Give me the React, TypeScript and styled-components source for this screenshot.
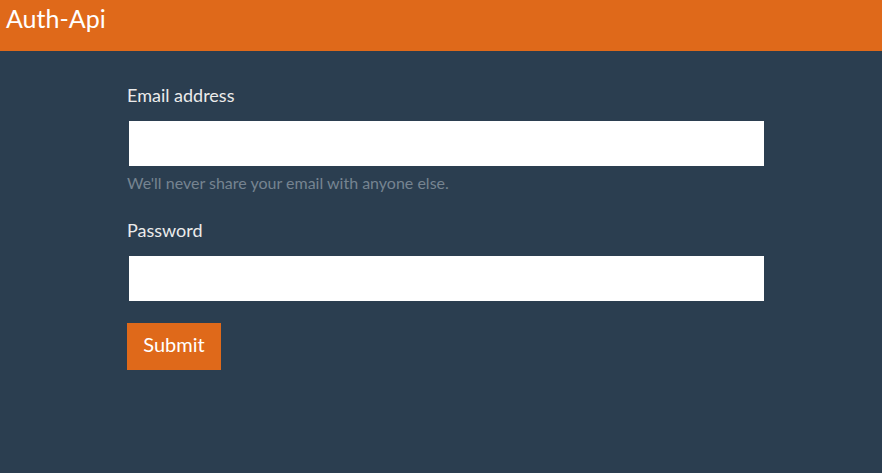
import React from 'react';
import styled, { createGlobalStyle } from 'styled-components';

const GlobalStyle = createGlobalStyle`
  *, *::before, *::after { box-sizing: border-box; }
  body {
    margin: 0;
    background: #2b3e50;
    color: #ebebeb;
    font-family: Lato, "Open Sans", sans-serif;
    font-size: 18px;
    line-height: 27px;
  }
`;

const Header = styled.header`
  padding: 0 6px 14px;
  background: #df691a;
`;

const Title = styled.h1`
  margin: 0;
  color: #fff;
  font-size: 25px;
  font-weight: 400;
  line-height: 37px;
`;

const Form = styled.form`
  width: 72.2%;
  margin-left: 14.4%;
  padding: 31px 0 24px;
`;

const Field = styled.div`
  margin-bottom: 22px;
`;

const Label = styled.label`
  display: block;
  margin-bottom: 12px;
`;

const TextBox = styled.input`
  display: block;
  width: 100%;
  height: 45px;
  padding: 6px 12px;
  border: 0;
  border-left: 2px solid #2b3e50;
  border-radius: 0;
  background: #fff;
  color: #495057;
  font: inherit;
`;

const Hint = styled.small`
  display: block;
  margin-top: 4px;
  color: #768491;
  font-size: 16px;
  line-height: 25px;
`;

const SubmitButton = styled.button`
  display: block;
  min-width: 94px;
  padding: 6px 16px 10px;
  border: 0;
  background: #df691a;
  color: #fff;
  font-family: inherit;
  font-size: 20px;
  line-height: 31px;
  cursor: pointer;
`;

export default function App() {
  return (
    <>
      <GlobalStyle />
      <Header>
        <Title>Auth-Api</Title>
      </Header>
      <main>
        <Form onSubmit={(event: React.FormEvent) => event.preventDefault()}>
          <Field>
            <Label htmlFor="email">Email address</Label>
            <TextBox id="email" type="email" aria-describedby="email-hint" />
            <Hint id="email-hint">We'll never share your email with anyone else.</Hint>
          </Field>
          <Field>
            <Label htmlFor="password">Password</Label>
            <TextBox id="password" type="password" />
          </Field>
          <SubmitButton type="submit">Submit</SubmitButton>
        </Form>
      </main>
    </>
  );
}
